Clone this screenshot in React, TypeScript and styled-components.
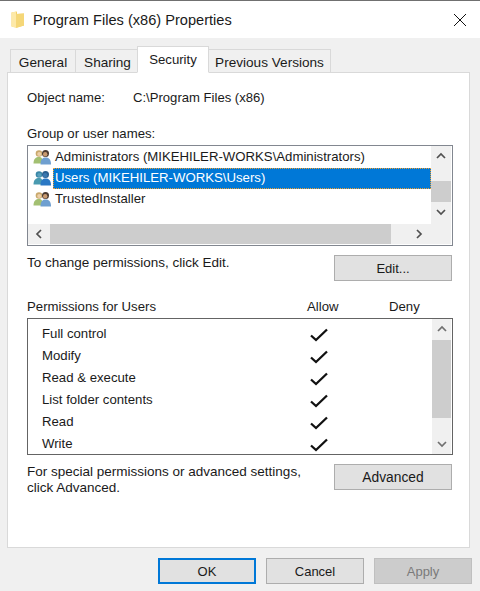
import React from "react";
import styled, { createGlobalStyle } from "styled-components";

const Global = createGlobalStyle`
  html, body { margin: 0; padding: 0; width: 480px; height: 591px; overflow: hidden; background: #f0f0f0; }
  * { box-sizing: border-box; }
`;
const Window = styled.div`
  width: 480px; height: 591px; display: flex; flex-direction: column;
  background: #f0f0f0; border-top: 1px solid #707070;
  font-family: "Liberation Sans", Arial, sans-serif; font-size: 13px; color: #111;
`;
const TitleBar = styled.header`
  height: 37px; background: #fff; display: flex; align-items: center; padding: 0 13px 0 11px; flex: none;
`;
const Title = styled.h1`
  margin: 0 0 0 8px; font-size: 14.6px; font-weight: 400; flex: 1; color: #1a1a1a;
`;
const Body = styled.div`
  flex: 1; display: flex; flex-direction: column; padding: 8px 10px 0 7px;
`;
const TabRow = styled.div`
  display: flex; align-items: flex-start; height: 27px; padding-left: 4px; position: relative; z-index: 1; margin-bottom: -1px; flex: none;
`;
const Tab = styled.div<{ $w: number; $active?: boolean; $pl?: number }>`
  width: ${(p) => p.$w}px; height: ${(p) => (p.$active ? 27 : 23)}px; margin-top: ${(p) => (p.$active ? 0 : 3)}px;
  border: 1px solid #d9d9d9; margin-left: -1px; font-size: ${(p) => (p.$active ? 13.2 : 13.6)}px;
  ${(p) => (p.$active ? "border-bottom: 1px solid #fff; position: relative; z-index: 1;" : "border-bottom: none;")}
  background: ${(p) => (p.$active ? "#fff" : "#f0f0f0")};
  display: flex; align-items: center; justify-content: center;
  padding-top: ${(p) => (p.$active ? 0 : 2)}px; padding-left: ${(p) => p.$pl ?? 0}px;
  color: #1a1a1a; white-space: nowrap;
`;
const Panel = styled.section`
  width: 463px; height: 476px; background: #fff; border: 1px solid #d9d9d9; padding: 10px 17px 0 19px; display: flex; flex-direction: column; flex: none;
`;
const ObjectRow = styled.div`
  display: flex; height: 17px; margin-top: 7px; color: #1a1a1a; font-size: 13.1px;
`;
const ObjectLabel = styled.span` width: 106px; `;
const GroupLabel = styled.div` margin-top: 19px; height: 17px; color: #1a1a1a; font-size: 13.2px; `;
const ListFrame = styled.div<{ $h: number }>`
  height: ${(p) => p.$h}px; width: 426px; border: 1px solid #828790; background: #fff; flex: none; display: grid;
`;
const UsersFrame = styled(ListFrame)`
  margin-top: 2px; padding: 0 1px 1px 0; grid-template-columns: 1fr 20px; grid-template-rows: 1fr 20px;
`;
const PermFrame = styled(ListFrame)`
  border-color: #646464; padding-right: 1px; grid-template-columns: 1fr 19px;
`;
const Rows = styled.div` padding-top: 1px; overflow: hidden; `;
const UserRow = styled.div`
  display: flex; align-items: center; height: 21px; padding-left: 5px; color: #1a1a1a; font-size: 13.2px;
`;
const UserText = styled.span<{ $sel?: boolean }>`
  flex: 1; height: 21px; line-height: 20px; padding-left: 2px; margin-left: 1px; white-space: nowrap;
  ${(p) => p.$sel && "background: #0078d7; color: #fff; outline: 1px dotted #f0a030; outline-offset: -1px;"}
`;
const VBar = styled.div<{ $pb?: number }>`
  background: #f0f0f0; display: flex; flex-direction: column; align-items: center; padding-bottom: ${(p) => p.$pb ?? 0}px;
`;
const VBarThumb = styled.div<{ $top: number; $h: number }>`
  width: 100%; height: ${(p) => p.$h}px; background: #cdcdcd; margin-top: ${(p) => p.$top}px; flex: none;
`;
const VBarTrack = styled.div` flex: 1; width: 100%; `;
const ArrowCell = styled.div`
  height: 20px; width: 20px; display: flex; align-items: center; justify-content: center; flex: none;
`;
const HBar = styled.div`
  background: #f0f0f0; display: flex; align-items: center; grid-column: 1 / 3; padding-left: 1px; padding-right: 22px;
`;
const HBarThumb = styled.div` width: 341px; height: 100%; margin-left: 1px; background: #cdcdcd; flex: none; `;
const HSpacer = styled.div` flex: 1; `;
const EditRow = styled.div`
  display: flex; justify-content: space-between; align-items: flex-start; margin-top: 9px; width: 425px;
`;
const EditText = styled.span` color: #1a1a1a; line-height: 15px; font-size: 13.5px; `;
const Button = styled.button<{ $w?: number; $fs?: number; $variant?: "default" | "disabled" }>`
  width: ${(p) => p.$w ?? 118}px; height: 26px; padding: 0; margin: 0; flex: none;
  font-family: inherit; font-size: ${(p) => p.$fs ?? 13}px; border-radius: 0;
  background: ${(p) => (p.$variant === "disabled" ? "#cccccc" : "#e1e1e1")};
  color: ${(p) => (p.$variant === "disabled" ? "#7a7a7a" : "#1a1a1a")};
  border: ${(p) => (p.$variant === "default" ? "2px solid #0078d7" : p.$variant === "disabled" ? "1px solid #bfbfbf" : "1px solid #adadad")};
`;
const PermHead = styled.div`
  display: grid; grid-template-columns: 280px 82px 64px; margin-top: 13px; height: 24px; width: 426px; color: #1a1a1a;
  align-items: center; font-size: 13.2px; flex: none;
`;
const PermRows = styled.div` overflow: hidden; padding-left: 14px; padding-top: 3px; `;
const PermRow = styled.div`
  display: grid; grid-template-columns: 268px 22px; height: 22px; align-items: center; color: #1a1a1a; font-size: 13.2px;
`;
const CheckMark = styled.svg`
  display: block; margin-top: 4px;
`;
const AdvRow = styled.div`
  display: flex; justify-content: space-between; align-items: flex-start; margin-top: 9px; width: 425px;
`;
const AdvText = styled.p` margin: 0; width: 290px; line-height: 16px; color: #1a1a1a; font-size: 13.5px; `;
const Footer = styled.footer`
  display: flex; justify-content: flex-end; gap: 10px; margin: 10px -2px 0 0;
`;

const Folder = () => (
  <svg width="14" height="18" viewBox="0 0 14 18">
    <path d="M0.5 1.5 L6 0.5 L6 3 L13 2.5 V14.5 L6 16.5 L0.5 15.5 Z" fill="#f3d06a" />
    <path d="M0.5 1.5 L5 0.5 V17 L0.5 15.5 Z" fill="#fde9a8" />
    <path d="M5 3 L13 2.5 V14.5 L5 17 Z" fill="#f5d778" />
  </svg>
);
const Close = () => (
  <svg width="14" height="14" viewBox="0 0 14 14"><path d="M1 1 L13 13 M13 1 L1 13" stroke="#111" strokeWidth="1" fill="none" /></svg>
);
const UsersIcon = ({ sel }: { sel?: boolean }) => (
  <svg width="19" height="17" viewBox="0 0 19 17">
    <circle cx="6" cy="4.5" r="3.3" fill={sel ? "#3a86a6" : "#c9a86c"} />
    <circle cx="6.3" cy="5" r="2.1" fill={sel ? "#58a0bc" : "#eccfa8"} />
    <path d="M0.5 14.5 C0.5 9.5 3 8 6 8 C8.5 8 10 9.5 10 14.5 Z" fill={sel ? "#4a9ab0" : "#a3c072"} />
    <circle cx="12.5" cy="4.5" r="3.5" fill={sel ? "#2a5f90" : "#4a3a30"} />
    <circle cx="12.2" cy="5.2" r="2.2" fill={sel ? "#3a78b0" : "#c89a70"} />
    <path d="M7.5 15.5 C7.5 10 10 8.5 12.5 8.5 C15.5 8.5 18 10 18 15.5 Z" fill={sel ? "#2a78c4" : "#6f9fd0"} />
  </svg>
);
const Chevron = ({ dir, color = "#505050" }: { dir: "up" | "down" | "left" | "right"; color?: string }) => {
  const d = { up: "M1 6 L5 2 L9 6", down: "M1 2 L5 6 L9 2", left: "M6 1 L2 5 L6 9", right: "M2 1 L6 5 L2 9" }[dir];
  const vertical = dir === "up" || dir === "down";
  return (
    <svg width={vertical ? 10 : 8} height={vertical ? 8 : 10} viewBox={vertical ? "0 0 10 8" : "0 0 8 10"}>
      <path d={d} stroke={color} strokeWidth="1.7" fill="none" />
    </svg>
  );
};
const Check = () => (
  <CheckMark width="18" height="14" viewBox="0 0 18 14"><path d="M1 7.5 L6 12 L17 1.5" stroke="#111" strokeWidth="2.3" fill="none" /></CheckMark>
);

const perms = ["Full control", "Modify", "Read & execute", "List folder contents", "Read", "Write"];

export default function App() {
  return (
    <Window>
      <Global />
      <TitleBar>
        <Folder />
        <Title>Program Files (x86) Properties</Title>
        <Close />
      </TitleBar>
      <Body>
        <TabRow>
          <Tab $w={66}>General</Tab>
          <Tab $w={63} $pl={2}>Sharing</Tab>
          <Tab $w={72} $active>Security</Tab>
          <Tab $w={123}>Previous Versions</Tab>
        </TabRow>
        <Panel>
          <ObjectRow><ObjectLabel>Object name:</ObjectLabel><span>C:\Program Files (x86)</span></ObjectRow>
          <GroupLabel>Group or user names:</GroupLabel>
          <UsersFrame $h={101}>
            <Rows>
              <UserRow><UsersIcon /><UserText>Administrators (MIKEHILER-WORKS\Administrators)</UserText></UserRow>
              <UserRow><UsersIcon sel /><UserText $sel>Users (MIKEHILER-WORKS\Users)</UserText></UserRow>
              <UserRow><UsersIcon /><UserText>TrustedInstaller</UserText></UserRow>
            </Rows>
            <VBar $pb={2}>
              <ArrowCell><Chevron dir="up" /></ArrowCell>
              <VBarThumb $top={15} $h={21} />
              <VBarTrack />
              <ArrowCell><Chevron dir="down" /></ArrowCell>
            </VBar>
            <HBar>
              <ArrowCell><Chevron dir="left" /></ArrowCell>
              <HBarThumb />
              <HSpacer />
              <ArrowCell><Chevron dir="right" /></ArrowCell>
            </HBar>
          </UsersFrame>
          <EditRow><EditText>To change permissions, click Edit.</EditText><Button>Edit...</Button></EditRow>
          <PermHead><span>Permissions for Users</span><span>Allow</span><span>Deny</span></PermHead>
          <PermFrame $h={137}>
            <PermRows>
              {perms.map((p) => (
                <PermRow key={p}><span>{p}</span><Check /></PermRow>
              ))}
            </PermRows>
            <VBar>
              <ArrowCell><Chevron dir="up" color="#707070" /></ArrowCell>
              <VBarThumb $top={1} $h={78} />
              <VBarTrack />
              <ArrowCell><Chevron dir="down" color="#707070" /></ArrowCell>
            </VBar>
          </PermFrame>
          <AdvRow>
            <AdvText>For special permissions or advanced settings, click Advanced.</AdvText>
            <Button $fs={13.8}>Advanced</Button>
          </AdvRow>
        </Panel>
        <Footer>
          <Button $w={98} $variant="default">OK</Button>
          <Button $w={98}>Cancel</Button>
          <Button $w={98} $variant="disabled">Apply</Button>
        </Footer>
      </Body>
    </Window>
  );
}
